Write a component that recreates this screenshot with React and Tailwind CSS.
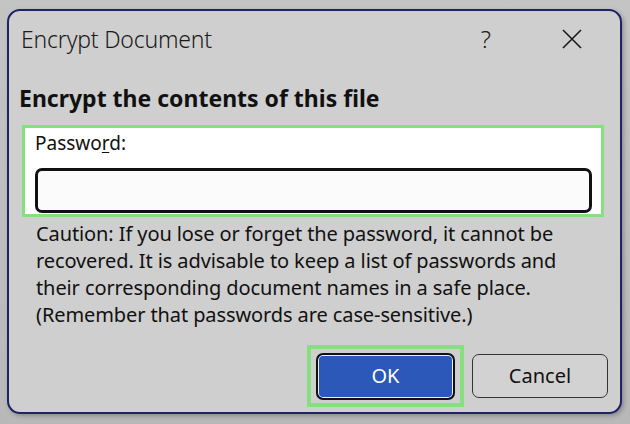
export default function App() {
  return (
    <div
      className="w-[630px] h-[424px] bg-gradient-to-b from-[#c4c4c4] to-[#b8b8b8] pt-[9px] pl-[7px]"
      style={{ fontFamily: '"Noto Sans", "Open Sans", sans-serif' }}
    >
      <div className="w-[615px] h-[405px] rounded-[13px] border-2 border-[#1f2266] bg-[#cfcfcf] shadow-[2px_2px_4px_rgba(0,0,0,0.25)] flex flex-col">
        {/* title bar */}
        <div className="h-[56px] flex items-center pl-[12px] pr-[37px]">
          <span className="text-[23px] font-light text-[#1a1a1a] tracking-[-0.2px]">
            Encrypt Document
          </span>
          <span className="ml-auto text-[24px] font-light text-[#1a1a1a] mr-[70px]">?</span>
          <svg width="22" height="22" viewBox="0 0 22 22" className="text-[#1a1a1a]">
            <path d="M2 2 L20 20 M20 2 L2 20" stroke="currentColor" strokeWidth="1.6" fill="none" />
          </svg>
        </div>

        {/* heading */}
        <div className="pl-[10px] pt-[18px] text-[23px] font-bold text-[#111] leading-[26px]">
          Encrypt the contents of this file
        </div>

        {/* password box */}
        <div className="ml-[13px] mt-[14px] w-[582px] h-[92px] border-[3px] border-[#86e07e] bg-white pt-[3px] pl-[10px] pr-[9px]">
          <div className="text-[19px] text-[#111] leading-[25px]">
            Passwo<span className="underline underline-offset-2">r</span>d:
          </div>
          <div className="mt-[12px] h-[45px] rounded-[7px] border-[3px] border-[#111] bg-[#fbfbfb]" />
        </div>

        {/* caution */}
        <div className="pl-[27px] pt-[3px] text-[20px] leading-[27px] text-[#111] whitespace-nowrap tracking-[-0.1px]">
          Caution: If you lose or forget the password, it cannot be
          <br />
          recovered. It is advisable to keep a list of passwords and
          <br />
          their corresponding document names in a safe place.
          <br />
          (Remember that passwords are case-sensitive.)
        </div>

        {/* buttons */}
        <div className="flex items-center mt-[17px] pl-[298px] gap-[8px]">
          <div className="w-[157px] h-[62px] border-[4px] border-[#86e07e] flex items-center justify-center">
            <button className="w-[139px] h-[47px] rounded-[7px] border-2 border-[#111] bg-[#2b58b9] shadow-[inset_0_0_0_1px_#e8eefc] text-white text-[20px]">
              OK
            </button>
          </div>
          <button className="w-[136px] h-[44px] rounded-[7px] border border-[#333] bg-[#d2d2d2] text-[#111] text-[20px]">
            Cancel
          </button>
        </div>
      </div>
    </div>
  );
}
